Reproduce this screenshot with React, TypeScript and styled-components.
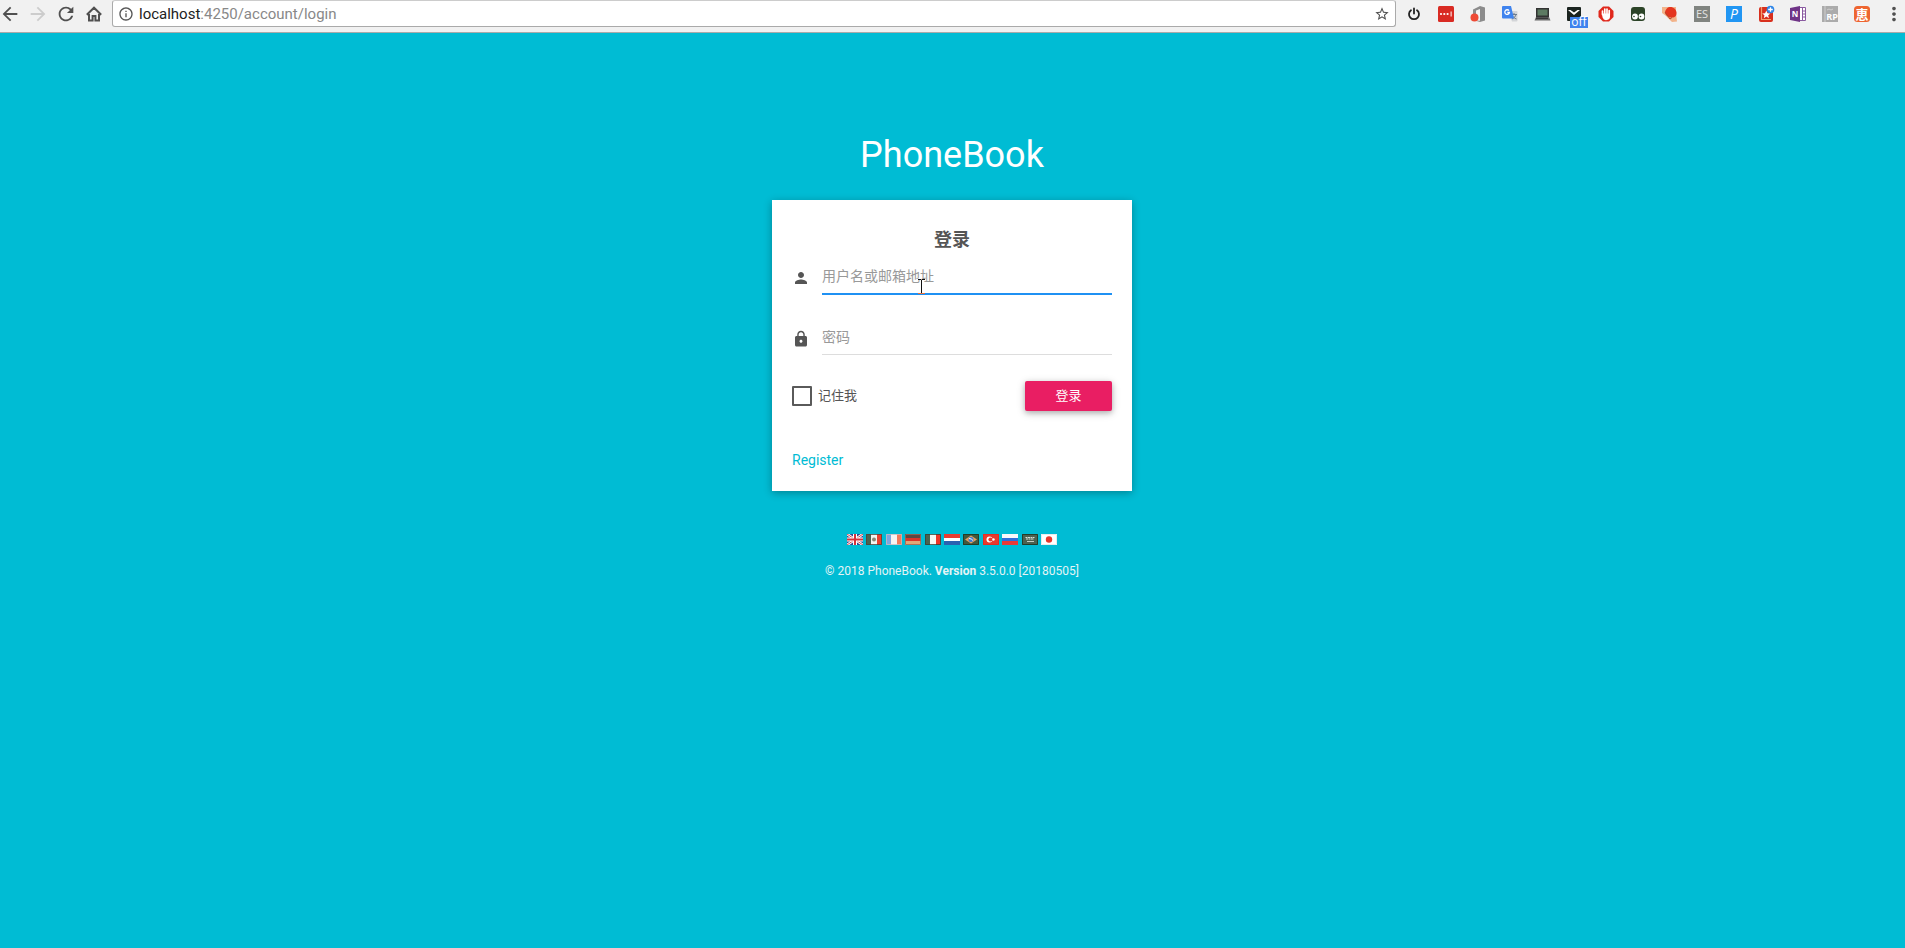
import React from 'react';
import styled, { createGlobalStyle } from 'styled-components';
import {
  MdArrowBack,
  MdArrowForward,
  MdInfoOutline,
  MdLock,
  MdMoreVert,
  MdPerson,
  MdRefresh,
  MdStarBorder,
} from 'react-icons/md';

const GlobalStyle = createGlobalStyle`
  *, *::before, *::after { box-sizing: border-box; }
  body {
    margin: 0;
    background: #00bcd4;
    color: #555;
    font-family: Roboto, "Noto Sans CJK SC", sans-serif;
    font-size: 14px;
  }
`;

/* ---------- browser bar ---------- */

const Toolbar = styled.header`
  display: flex;
  height: 33px;
  padding: 0 3px 5px 2px;
  background: #f1f1f1;
  border-bottom: 1px solid #aaa;
`;

const ButtonGroup = styled.div<{ $gap: number }>`
  display: flex;
  align-items: center;
  gap: ${(p) => p.$gap}px;
`;

const ToolButton = styled.button<{ $dim?: boolean }>`
  position: relative;
  display: block;
  width: 16px;
  height: 16px;
  padding: 0;
  border: 0;
  background: none;
  color: ${(p) => (p.$dim ? '#ccc' : '#505050')};

  svg {
    display: block;
    width: 16px;
    height: 16px;
    overflow: visible;
  }
`;

const NavIcon = styled.span`
  display: block;
  margin: -3px;

  svg {
    width: 22px;
    height: 22px;
  }
`;

const AddressBar = styled.div`
  flex: 1;
  display: flex;
  align-items: center;
  gap: 5px;
  margin: 0 10px;
  padding: 0 5px;
  background: #fff;
  border: 1px solid #aaa;
  border-top-color: #ccc;
  border-radius: 3px;
  color: #555;
`;

const Address = styled.div`
  flex: 1;
  color: #888;
  font-size: 15px;
  line-height: 20px;
  white-space: nowrap;
  outline: none;
`;

const Host = styled.span`
  color: #222;
`;

const OffBadge = styled.span`
  position: absolute;
  top: 11px;
  left: 4px;
  width: 18px;
  height: 11px;
  background: #3f83ee;
  color: #fff;
  font: 12px/10px "Open Sans", sans-serif;
  text-align: center;
`;

/* ---------- login page ---------- */

const Page = styled.main`
  display: flex;
  flex-direction: column;
  align-items: center;
  padding: 101px 17px 40px 16px;
`;

const Brand = styled.h1`
  margin: 0 0 24px;
  color: #fff;
  font-size: 36px;
  font-weight: 400;
  line-height: 42px;
`;

const Card = styled.form`
  width: 100%;
  max-width: 360px;
  padding: 27px 20px 21px;
  background: #fff;
  box-shadow: 0 2px 8px rgba(0, 0, 0, 0.3);
`;

const CardTitle = styled.h2`
  margin: 0 0 6px;
  font-size: 18px;
  font-weight: 700;
  line-height: 26px;
  text-align: center;
`;

const Field = styled.div`
  display: flex;
  gap: 12px;
  margin-bottom: 26px;
`;

const FieldIcon = styled.label`
  padding-top: 10px;

  svg {
    display: block;
    width: 18px;
    height: 18px;
  }
`;

const FieldLine = styled.div<{ $active?: boolean }>`
  position: relative;
  flex: 1;
  height: 35px;
  border-bottom: 1px solid #ddd;

  &::after {
    content: '';
    display: ${(p) => (p.$active ? 'block' : 'none')};
    position: absolute;
    right: 0;
    bottom: -2px;
    left: 0;
    height: 2px;
    background: #1f91f3;
  }
`;

const TextInput = styled.input`
  display: block;
  width: 100%;
  height: 34px;
  padding: 0;
  border: 0;
  outline: 0;
  background: none;
  color: #555;
  font: inherit;

  &::placeholder {
    color: #999;
    opacity: 1;
  }
`;

const TextPointer = styled.svg`
  position: absolute;
  top: 20px;
  left: 96px;
  z-index: 1;
`;

const Actions = styled.div`
  display: flex;
  align-items: center;
  justify-content: space-between;
  margin-bottom: 39px;
`;

const Remember = styled.label`
  display: flex;
  align-items: center;
  gap: 6px;
  font-size: 13px;
  line-height: 20px;
`;

const Checkbox = styled.input`
  appearance: none;
  width: 20px;
  height: 20px;
  margin: 0;
  border: 2px solid #5a5a5a;
  border-radius: 1px;

  &:checked {
    background: #e91e63;
  }
`;

const SubmitButton = styled.button`
  width: 87px;
  height: 30px;
  padding: 0 0 4px;
  border: 0;
  border-radius: 2px;
  background: #e91e63;
  box-shadow: 0 2px 5px rgba(0, 0, 0, 0.16), 0 2px 8px rgba(0, 0, 0, 0.22);
  color: #fff;
  font: inherit;
  font-size: 13px;
`;

const RegisterLink = styled.a`
  display: block;
  width: max-content;
  color: #00bcd4;
  line-height: 20px;
  text-decoration: none;
`;

const Languages = styled.nav`
  display: flex;
  justify-content: space-between;
  width: 210px;
  margin-top: 43px;
`;

const FlagLink = styled.a`
  display: block;
  width: 16px;
  height: 11px;

  svg {
    display: block;
  }
`;

const Footer = styled.footer`
  margin-top: 17px;
  color: #e4f4f6;
  font-size: 12px;
  line-height: 18px;
`;

/* ---------- drawings ---------- */

const HomeIcon = () => (
  <svg viewBox="0 0 16 16" fill="none" stroke="currentColor" strokeWidth="2">
    <path d="M.8 8.7 8 1.7l7.2 7M3 8v6.5h3.6V10h2.8v4.5H13V8" />
  </svg>
);

const extensions: { name: string; badge?: string; art: React.ReactNode }[] = [
  {
    name: 'Power',
    art: (
      <g fill="none" stroke="#222" strokeWidth="1.8" strokeLinecap="round">
        <path d="M5 4.2a5 5 0 1 0 6 0M8 2.5v5" />
      </g>
    ),
  },
  {
    name: 'Passwords',
    art: (
      <>
        <rect width="16" height="16" rx="1.5" fill="#d92b23" />
        <g fill="#fff">
          <circle cx="3" cy="8" r="1.1" />
          <circle cx="6.3" cy="8" r="1.1" />
          <circle cx="9.6" cy="8" r="1.1" />
          <rect x="12.6" y="5.5" width="1" height="5" />
        </g>
      </>
    ),
  },
  {
    name: 'Office',
    art: (
      <>
        <path d="M3 3.5 10 0l5 1.5v13L10 16l-5-1.5 5 .2V3L6 4.4v7L3 12.5z" fill="#8c8c8c" />
        <circle cx="4.5" cy="11.5" r="4" fill="#ee4a35" />
      </>
    ),
  },
  {
    name: 'Translate',
    art: (
      <>
        <path d="M6 5h8.5a1 1 0 0 1 1 1v8.5a1 1 0 0 1-1 1H10z" fill="#d3d5d8" />
        <path d="M9.5 8.5h5.5M12 7v1.5M14 8.5c-.4 2-2 3.600-4 4.500M10.500 9.500c.6 1.600 2 2.800 4 3.500" fill="none" stroke="#6d7c8e" />
        <path d="M1 0h8l3 12.500H1a1 1 0 0 1-1-1V1a1 1 0 0 1 1-1z" fill="#3f83ee" />
        <path d="M7 4.700A2.300 2.300 0 1 0 7.400 6.500H5.300" fill="none" stroke="#fff" strokeWidth="1.300" />
      </>
    ),
  },
  {
    name: 'Laptop',
    art: (
      <>
        <rect x="2" y="2" width="13" height="9" fill="#333" />
        <rect x="3.500" y="3.500" width="10" height="6" fill="#5d7a62" />
        <path d="M2 11h13l1.500 3.500H.5z" fill="#6b6b6b" />
        <path d="M2 12.200h12" stroke="#222" />
      </>
    ),
  },
  {
    name: 'Mail',
    badge: 'off',
    art: (
      <>
        <rect x="1" y="1" width="14" height="14" rx="1" fill="#1b2420" />
        <path d="M2 4h2.500L8 6.500 11.500 4H14L8 9z" fill="#fff" />
      </>
    ),
  },
  {
    name: 'Blocker',
    art: (
      <>
        <path d="M5 .5h6L15.500 5v6L11 15.500H5L.5 11V5z" fill="#e0281c" />
        <path d="M4.500 8.500V5M6.800 8V3M9 8V3M11.200 9V4.500" stroke="#fff" strokeWidth="1.700" strokeLinecap="round" />
        <path d="M3.800 7.500h8.200V10a3.800 3.800 0 0 1-7.400 1.500z" fill="#fff" />
      </>
    ),
  },
  {
    name: 'Scripts',
    art: (
      <>
        <rect x="1" y="1" width="14" height="14" rx="3" fill="#2c4428" />
        <circle cx="5" cy="10.500" r="2.900" fill="#fff" />
        <circle cx="11.500" cy="10.500" r="2.900" fill="#fff" />
        <circle cx="4" cy="10.500" r=".8" fill="#2c4428" />
        <circle cx="10.500" cy="10.500" r=".8" fill="#2c4428" />
      </>
    ),
  },
  {
    name: 'Postman',
    art: (
      <>
        <path d="M0 1h14v6l1 8.500-5 .5L4 10 0 7z" fill="#f2b38a" />
        <path d="M6 1.500c4-1.500 8 1 8.500 5 .3 3-1.500 5-4.500 5S3 9.500 3 6.500c0-2 1.500-4 3-5z" fill="#e4351f" />
        <path d="m3 6 5 7 2-1.500" stroke="#b4482b" fill="none" />
      </>
    ),
  },
  {
    name: 'ES',
    art: (
      <>
        <rect width="16" height="16" fill="#808480" />
        <text x="8" y="12" textAnchor="middle" fontSize="11" fill="#e4e4e4" fontFamily="Open Sans, sans-serif">ES</text>
      </>
    ),
  },
  {
    name: 'Pocket',
    art: (
      <>
        <rect width="16" height="16" fill="#2196f3" />
        <text x="8" y="13" textAnchor="middle" fontSize="14" fontStyle="italic" fill="#fff" fontFamily="Open Sans, sans-serif">P</text>
      </>
    ),
  },
  {
    name: 'Bookmarks',
    art: (
      <>
        <rect x="1" y="1" width="14" height="15" rx="2" fill="#d8301e" />
        <path d="M3.500 1v12.500H13" stroke="#f3a06c" strokeWidth="1.200" fill="none" />
        <path d="m8.300 4.500 1.200 2.700 2.900.2-2.200 1.900.7 2.900-2.600-1.600-2.500 1.600.6-2.900-2.200-1.900 2.900-.2z" fill="#fff" />
        <circle cx="12.500" cy="3.500" r="3.800" fill="#2f86e8" />
        <path d="M12.500 1.200v4.600M10.200 3.500h4.600" stroke="#fff" strokeWidth="1.300" />
      </>
    ),
  },
  {
    name: 'OneNote',
    art: (
      <>
        <path d="M9 1.500h6.500v13H9z" fill="#fff" stroke="#8a5aa0" />
        <path d="M12.500 2v12M12.500 5H15M12.500 8H15M12.500 11H15" stroke="#8a5aa0" />
        <path d="M0 2 10 0v16L0 14z" fill="#6f3487" />
        <text x="5" y="11" textAnchor="middle" fontSize="8" fontWeight="700" fill="#fff" fontFamily="Open Sans, sans-serif">N</text>
      </>
    ),
  },
  {
    name: 'Axure RP',
    art: (
      <>
        <rect x="0" width="16" height="16" fill="#ababab" />
        <path d="M3 0v16M5 4l2-1 2 1 2-1" stroke="#cfcfcf" fill="none" />
        <text x="10" y="14" textAnchor="middle" fontSize="9" fontWeight="700" fill="#fff" fontFamily="Open Sans, sans-serif">RP</text>
      </>
    ),
  },
  {
    name: 'Shopping',
    art: (
      <>
        <rect width="16" height="16" rx="3.500" fill="#ee6530" />
        <text x="8" y="13" textAnchor="middle" fontSize="13" fontWeight="700" fill="#fff" fontFamily="Noto Sans CJK SC, sans-serif">恵</text>
      </>
    ),
  },
];

const vertical = (a: string, b: string, c: string) => (
  <>
    <path d="M0 0h6v11H0z" fill={a} />
    <path d="M5 0h6v11H5z" fill={b} />
    <path d="M11 0h5v11h-5z" fill={c} />
  </>
);

const horizontal = (a: string, b: string, c: string) => (
  <>
    <path d="M0 0h16v4H0z" fill={a} />
    <path d="M0 4h16v3H0z" fill={b} />
    <path d="M0 7h16v4H0z" fill={c} />
  </>
);

const flags: { name: string; edge?: string; art: React.ReactNode }[] = [
  {
    name: 'English',
    art: (
      <>
        <path d="M0 0h16v11H0z" fill="#33488f" />
        <path d="m0 0 16 11M16 0 0 11" stroke="#fff" strokeWidth="2.600" />
        <path d="m0 0 16 11M16 0 0 11" stroke="#d8434a" />
        <path d="M8 0v11M0 5.500h16" stroke="#fff" strokeWidth="4" />
        <path d="M8 0v11M0 5.500h16" stroke="#d8303a" strokeWidth="2" />
      </>
    ),
  },
  {
    name: 'Español (México)',
    edge: '#51413a',
    art: (
      <>
        {vertical('#4a6350', '#f5f5f0', '#e8402e')}
        <circle cx="8" cy="5.500" r="2" fill="#8b8774" />
      </>
    ),
  },
  { name: 'Français', edge: '#c9b9bd', art: vertical('#7da5e0', '#f8f4f2', '#f07a5c') },
  { name: 'Deutsch', edge: '#a06450', art: horizontal('#5a4a44', '#dc3529', '#e0a878') },
  { name: 'Italiano', edge: '#3a4034', art: vertical('#4a6350', '#f8f8f4', '#ee3528') },
  { name: 'Nederlands', art: horizontal('#ea3c30', '#fff', '#2a62b0') },
  {
    name: 'Português (Brasil)',
    edge: '#20361f',
    art: (
      <>
        <path d="M0 0h16v11H0z" fill="#41583f" />
        <path d="m8 1.500 6 4-6 4-6-4z" fill="#e5a060" />
        <circle cx="8" cy="5.500" r="2.500" fill="#3b7bd0" />
        <path d="M6 4.500q2.500 0 4 2" stroke="#fff" fill="none" />
      </>
    ),
  },
  {
    name: 'Türkçe',
    edge: '#e8281e',
    art: (
      <>
        <path d="M0 0h16v11H0z" fill="#ea3a2e" />
        <circle cx="6.500" cy="5.500" r="3" fill="#fff" />
        <circle cx="7.500" cy="5.500" r="2.100" fill="#ea3a2e" />
        <circle cx="10.500" cy="5.500" r="1.200" fill="#fff" />
      </>
    ),
  },
  { name: 'Русский', art: horizontal('#f8f8fa', '#2f6fd8', '#ea3a36') },
  {
    name: 'العربية',
    edge: '#1d331e',
    art: (
      <>
        <path d="M0 0h16v11H0z" fill="#4c6150" />
        <path d="M3.500 3.500h9M4 5h8" stroke="#d8dfd6" strokeDasharray="2 .5" />
        <path d="M5 7.500h7" stroke="#c4cec3" />
      </>
    ),
  },
  {
    name: '日本語',
    edge: '#e6e6e6',
    art: (
      <>
        <path d="M0 0h16v11H0z" fill="#fff" />
        <circle cx="8" cy="5.500" r="3.200" fill="#e8352a" />
      </>
    ),
  },
];

export default function App() {
  return (
    <>
      <GlobalStyle />
      <Toolbar>
        <ButtonGroup $gap={12}>
          <ToolButton aria-label="Back">
            <NavIcon><MdArrowBack /></NavIcon>
          </ToolButton>
          <ToolButton aria-label="Forward" $dim>
            <NavIcon><MdArrowForward /></NavIcon>
          </ToolButton>
          <ToolButton aria-label="Reload">
            <NavIcon><MdRefresh /></NavIcon>
          </ToolButton>
          <ToolButton aria-label="Home"><HomeIcon /></ToolButton>
        </ButtonGroup>
        <AddressBar>
          <MdInfoOutline size={16} />
          <Address role="textbox" aria-label="Address" tabIndex={0}>
            <Host>localhost</Host>:4250/account/login
          </Address>
          <ToolButton aria-label="Bookmark this page"><MdStarBorder /></ToolButton>
        </AddressBar>
        <ButtonGroup $gap={16}>
          {extensions.map((e) => (
            <ToolButton key={e.name} aria-label={e.name}>
              <svg viewBox="0 0 16 16">{e.art}</svg>
              {e.badge && <OffBadge>{e.badge}</OffBadge>}
            </ToolButton>
          ))}
          <ToolButton aria-label="Menu">
            <NavIcon><MdMoreVert /></NavIcon>
          </ToolButton>
        </ButtonGroup>
      </Toolbar>

      <Page>
        <Brand>PhoneBook</Brand>
        <Card onSubmit={(e) => e.preventDefault()}>
          <CardTitle>登录</CardTitle>
          <Field>
            <FieldIcon htmlFor="user" aria-label="用户名或邮箱地址"><MdPerson /></FieldIcon>
            <FieldLine $active>
              <TextInput id="user" type="text" placeholder="用户名或邮箱地址" />
              <TextPointer width="7" height="16" viewBox="0 0 7 16" aria-hidden="true">
                <path d="M0 .5h3M4 .5h3M3.500 1v13" stroke="#111" />
                <path d="M0 14.500h7" stroke="#e07040" />
              </TextPointer>
            </FieldLine>
          </Field>
          <Field>
            <FieldIcon htmlFor="password" aria-label="密码"><MdLock /></FieldIcon>
            <FieldLine>
              <TextInput id="password" type="password" placeholder="密码" />
            </FieldLine>
          </Field>
          <Actions>
            <Remember>
              <Checkbox type="checkbox" />
              记住我
            </Remember>
            <SubmitButton type="submit">登录</SubmitButton>
          </Actions>
          <RegisterLink href="#register">Register</RegisterLink>
        </Card>
        <Languages aria-label="Languages">
          {flags.map((f) => (
            <FlagLink key={f.name} href="#language" aria-label={f.name}>
              <svg width="16" height="11" viewBox="0 0 16 11">
                {f.art}
                {f.edge && <path d="M.5.5h15v10H.5z" fill="none" stroke={f.edge} strokeOpacity=".8" />}
              </svg>
            </FlagLink>
          ))}
        </Languages>
        <Footer>
          © 2018 PhoneBook. <b>Version</b> 3.5.0.0 [20180505]
        </Footer>
      </Page>
    </>
  );
}
